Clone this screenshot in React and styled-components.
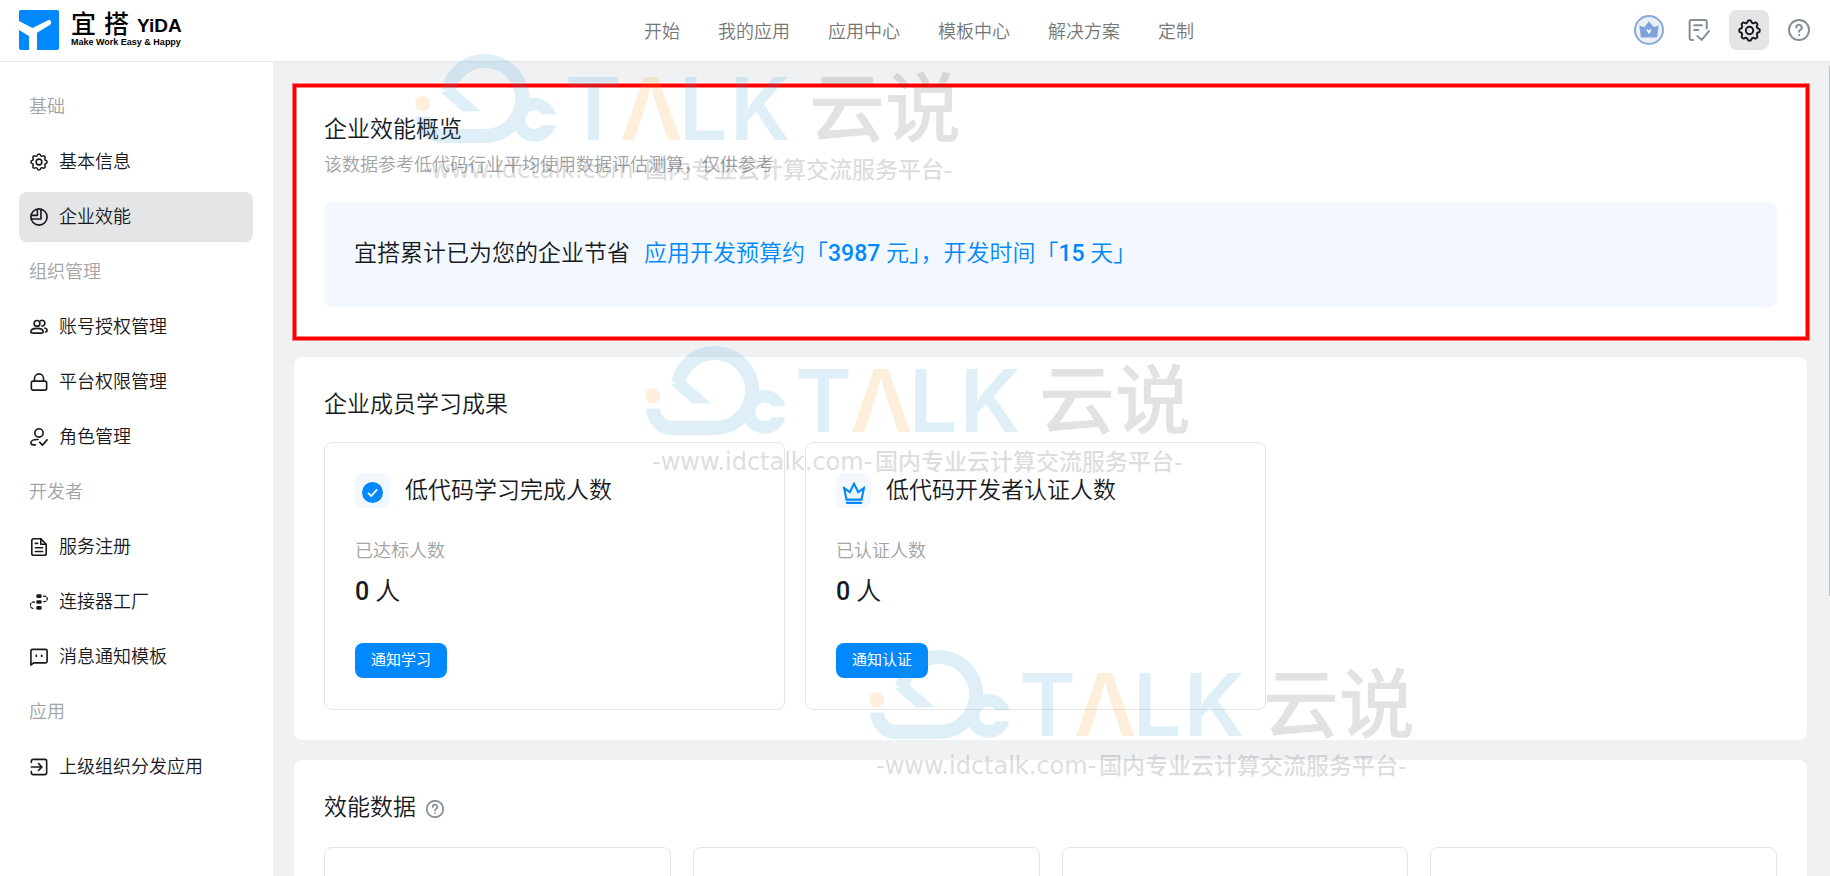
import React, { useState } from 'react';
import styled, { createGlobalStyle } from 'styled-components'

const white = '#ffffff';
const black = '#171a1d';
const grey = '#747677';
const lightGrey = '#a2a3a5';
const blue = '#0089ff';
const paleBlue = '#f3f8ff';
const line = '#e4e5e7';
const selected = '#e4e5e7';
const page = '#f0f1f3';

const GlobalStyle = createGlobalStyle`
  * {
    box-sizing: border-box;
  }

  body {
    margin: 0;
    color: ${black};
    background-color: ${page};
    font-family: Roboto, "Noto Sans CJK SC", sans-serif;
    font-weight: 350;
    font-size: 18px;
  }

  h2, h3, p, ul {
    margin: 0;
    padding: 0;
    font-weight: inherit;
  }
`

const Layout = styled.div`
  position: relative;
  display: flex;
  flex-direction: column;
  height: 100vh;
  overflow: hidden;
`

const Header = styled.header`
  display: grid;
  grid-template-columns: 1fr auto 1fr;
  align-items: center;
  flex: none;
  height: 62px;
  padding: 0 11px 1px 19px;
  background-color: ${white};
  border-bottom: 1px solid ${line};
`

const Brand = styled.a`
  display: flex;
  align-items: center;
  gap: 12px;
  color: #000;
  text-decoration: none;

  svg {
    flex: none;
  }
`

const BrandText = styled.span`
  display: flex;
  flex-direction: column;
  white-space: nowrap;
`

const BrandName = styled.span`
  display: flex;
  align-items: flex-end;
  gap: 8px;
  font-family: "Noto Sans CJK SC", sans-serif;
  font-weight: 500;
  font-size: 25px;
  line-height: 24px;

  b {
    font-family: "Liberation Sans", Arial, sans-serif;
    font-size: 19px;
    line-height: 16px;
  }
`

const Slogan = styled.span`
  font-family: "Liberation Sans", Arial, sans-serif;
  font-weight: 700;
  font-size: 9px;
  line-height: 16px;
`

const TopNav = styled.nav`
  display: flex;
  gap: 38px;
`

const TopLink = styled.a`
  padding-top: 3px;
  color: ${grey};
  line-height: 26px;
  text-decoration: none;
`

const Tools = styled.div`
  display: flex;
  justify-content: flex-end;
  gap: 10px;
`

const ToolButton = styled.button`
  display: flex;
  align-items: center;
  justify-content: center;
  width: 40px;
  height: 40px;
  padding: 0;
  border: none;
  border-radius: 8px;
  color: ${props => props.$active ? black : '#868e96'};
  background-color: ${props => props.$active ? selected : 'transparent'};
  cursor: pointer;
`

const Body = styled.div`
  display: flex;
  flex: 1;
  min-height: 0;
`

const Sidebar = styled.nav`
  flex: none;
  width: 273px;
  padding: 20px 20px 20px 19px;
  background-color: ${white};
`

const Menu = styled.ul`
  display: flex;
  flex-direction: column;
  gap: 5px;
  list-style: none;
`

const MenuLabel = styled.li`
  height: 50px;
  padding-left: 10px;
  color: ${lightGrey};
  line-height: 50px;
`

const MenuLink = styled.a`
  display: flex;
  align-items: center;
  gap: 11px;
  height: 50px;
  padding: 0 11px;
  border-radius: 8px;
  color: ${black};
  background-color: ${props => props.$active ? selected : 'transparent'};
  line-height: 26px;
  text-decoration: none;
`

const Main = styled.main`
  display: flex;
  flex-direction: column;
  flex: 1;
  gap: 20px;
  min-width: 0;
  padding: 20px 23px 20px 21px;
  overflow-y: auto;
  scrollbar-width: none;
`

const Panel = styled.section`
  position: relative;
  flex: none;
  padding: 30px;
  border-radius: 8px;
  background-color: ${white};
`

const Highlight = styled.div`
  position: absolute;
  top: 2px;
  right: -2px;
  bottom: -3px;
  left: -1px;
  border: 3px solid #ff0000;
  box-shadow: 0 0 0 1px rgba(255, 0, 0, .5), inset 0 0 0 1px rgba(255, 0, 0, .5);
  pointer-events: none;
`

const PanelTitle = styled.h2`
  display: flex;
  align-items: center;
  gap: 10px;
  font-size: 23px;
  line-height: 35px;

  svg {
    margin-top: 3px;
    color: #868e96;
  }
`

const Hint = styled.p`
  margin-top: 5px;
  color: ${lightGrey};
  line-height: 26px;
`

const Banner = styled.div`
  display: flex;
  gap: 14px;
  margin-top: 24px;
  padding: 34px 30px 36px;
  border-radius: 8px;
  background-color: ${paleBlue};
  font-size: 23px;
  line-height: 35px;
`

const Saved = styled.span`
  color: ${blue};

  b {
    font-weight: 500;
  }
`

const StudyCards = styled.div`
  display: flex;
  gap: 20px;
  margin-top: 20px;
`

const StudyCard = styled.article`
  flex: 0 1 461px;
  padding: 30px 30px 31px;
  border: 1px solid ${line};
  border-radius: 8px;
`

const StudyHead = styled.div`
  display: flex;
  align-items: center;
  gap: 15px;

  h3 {
    font-size: 23px;
    line-height: 35px;
  }
`

const StudyIcon = styled.span`
  display: flex;
  align-items: center;
  justify-content: center;
  width: 35px;
  height: 35px;
  padding-top: 4px;
  border-radius: 8px;
  color: ${blue};
  background-color: ${paleBlue};
`

const StudyLabel = styled.p`
  margin-top: 30px;
  color: ${lightGrey};
  line-height: 26px;
`

const StudyValue = styled.p`
  margin-top: 10px;
  font-size: 25px;
  line-height: 35px;

  b {
    font-weight: 500;
  }
`

const PrimaryButton = styled.button`
  height: 35px;
  margin-top: 34px;
  padding: 0 16px 4px;
  border: none;
  border-radius: 8px;
  color: ${white};
  background-color: ${blue};
  font: inherit;
  font-weight: 400;
  font-size: 15px;
  cursor: pointer;
`

const DataGrid = styled.div`
  display: grid;
  grid-template-columns: repeat(4, 1fr);
  gap: 22px;
  margin-top: 22px;
`

const DataCard = styled.article`
  height: 180px;
  border: 1px solid ${line};
  border-radius: 8px;
`

const ScrollThumb = styled.div`
  position: absolute;
  top: 66px;
  right: 0;
  width: 1px;
  height: 530px;
  background-color: #c1c1c1;
`

const Mark = styled.svg`
  position: absolute;
  top: ${props => props.$top}px;
  left: ${props => props.$left}px;
  opacity: .15;
  overflow: visible;
  pointer-events: none;
`

const Icon = ({ size = 18, width = 1.8, box = '2 2 20 20', children }) => (
  <svg width={size} height={size} viewBox={box} fill="none" stroke="currentColor"
    strokeWidth={width} strokeLinecap="round" strokeLinejoin="round" aria-hidden="true">
    {children}
  </svg>
)

const GearSVG = ({ size, width = 1.7 }) => (
  <Icon size={size} width={width}>
    <path d="M10.325 4.317c.426-1.756 2.924-1.756 3.35 0a1.724 1.724 0 0 0 2.573 1.066c1.543-.94 3.31.826 2.37 2.37a1.724 1.724 0 0 0 1.065 2.572c1.756.426 1.756 2.924 0 3.35a1.724 1.724 0 0 0-1.066 2.573c.94 1.543-.826 3.31-2.37 2.37a1.724 1.724 0 0 0-2.572 1.065c-.426 1.756-2.924 1.756-3.35 0a1.724 1.724 0 0 0-2.573-1.066c-1.543.94-3.31-.826-2.37-2.37a1.724 1.724 0 0 0-1.065-2.572c-1.756-.426-1.756-2.924 0-3.35a1.724 1.724 0 0 0 1.066-2.573c-.94-1.543.826-3.31 2.37-2.37 1 .608 2.296.07 2.572-1.065z" />
    <circle cx="12" cy="12" r="3.2" />
  </Icon>
)

const HelpSVG = ({ size, width }) => (
  <Icon size={size} width={width}>
    <circle cx="12" cy="12" r="9.1" />
    <path d="M9.5 9.7a2.5 2.5 0 1 1 3.6 2.2c-.7.4-1.1.9-1.1 1.7" />
    <path d="M12 16.6v.1" />
  </Icon>
)

const PieSVG = () => (
  <Icon>
    <circle cx="12" cy="12" r="9" />
    <path d="M14.2 3.4v10.8H3.4" />
    <path d="M10.2 3.6v6.6H3.6" />
  </Icon>
)

const UsersSVG = () => (
  <Icon>
    <circle cx="9.8" cy="8" r="3.2" />
    <path d="M3 17.2c0-2.7 2.8-3.7 6.8-3.7s6.8 1 6.8 3.7c0 1.2-.8 1.6-2.2 1.6H5.2C3.8 18.8 3 18.4 3 17.2z" />
    <path d="M13.8 5a3.2 3.2 0 1 1 1.4 6M18.5 13.2c1.8.6 2.6 1.4 2.6 2.7 0 1-.8 1.6-2 1.7" />
  </Icon>
)

const LockSVG = () => (
  <Icon>
    <rect x="3.5" y="11" width="17" height="10" rx="2" />
    <path d="M7 11V8a5 5 0 0 1 10 0v3" />
  </Icon>
)

const RoleSVG = () => (
  <Icon>
    <circle cx="12" cy="7.5" r="4.6" />
    <path d="M11 14.8c-4.5-.4-8 1-8 3.6 0 1.6 1.2 2.3 3 2.3h2" />
    <path d="M12.8 18l3 3 5.2-5.8" />
  </Icon>
)

const DocSVG = () => (
  <Icon>
    <path d="M14 2.9H6a2 2 0 0 0-2 2v14.2a2 2 0 0 0 2 2h12a2 2 0 0 0 2-2V9z" />
    <path d="M14 3v6h6M8 8h2.5M8 12.8h8M8 17h8" />
  </Icon>
)

const ConnectorSVG = () => (
  <Icon width={1.4}>
    <g fill="currentColor" stroke="none">
      <rect x="9" y="3.5" width="6" height="4" rx="1.5" />
      <rect x="9" y="10" width="6" height="4" rx="1.5" />
      <rect x="9" y="16.5" width="6" height="4" rx="1.5" />
    </g>
    <path d="M17 5.5h1.2a3 3 0 0 1 0 6H17M7 12H5.8a3.5 3.5 0 0 0 0 7H7" strokeDasharray="2.6 1.8" />
  </Icon>
)

const MessageSVG = () => (
  <Icon>
    <path d="M3 21V5a1.5 1.5 0 0 1 1.5-1.5h15A1.5 1.5 0 0 1 21 5v12a1.5 1.5 0 0 1-1.5 1.5H6z" />
    <path d="M9 10.3v.8M15 10.3v.8" strokeWidth="2" />
  </Icon>
)

const EnterSVG = () => (
  <Icon>
    <path d="M3.5 7V5.5a2 2 0 0 1 2-2h13a2 2 0 0 1 2 2v13a2 2 0 0 1-2 2h-13a2 2 0 0 1-2-2V17" />
    <path d="M3.5 12H15M11.5 8.2l3.8 3.8-3.8 3.8" />
  </Icon>
)

const TaskSVG = () => (
  <Icon size={22}>
    <path d="M6.5 21.1H5a1.5 1.5 0 0 1-1.5-1.5V4.4A1.5 1.5 0 0 1 5 2.9h12.5A1.5 1.5 0 0 1 19 4.4v6.2" />
    <path d="M7.6 7.6h7M7.6 12h3.8M10.5 17.5l4 3.5L21 13" />
  </Icon>
)

const VipSVG = () => (
  <svg width="30" height="30" viewBox="0 0 30 30" aria-hidden="true">
    <circle cx="15" cy="15" r="14" fill="#eceff4" stroke="#86a8dd" strokeWidth="2" />
    <path d="M5.3 10.5l5 1.7L15 6.3l4.700 5.900 5-1.700L23.300 21c-.1 1.100-.7 1.600-1.700 1.600H8.400c-1 0-1.600-.5-1.700-1.600z" fill="#7ea3dc" />
    <path d="M13.200 14.500l1.800 3.200 1.800-3.200" fill="none" stroke="#ffffff" strokeWidth="1.6" />
  </svg>
)

const LogoSVG = () => (
  <svg width="40" height="40" viewBox="0 0 40 40" aria-hidden="true">
    <rect width="40" height="40" rx="2" fill={blue} />
    <path d="M0 11l13.5 7L29 10.3c1.5-.7 2.7 0 3 1.5.3 1.4 0 2.4-1.2 3.2L18 22.8V40h-8V26L0 20z" fill={white} />
  </svg>
)

const DoneSVG = () => (
  <svg width="21" height="21" viewBox="0 0 21 21" aria-hidden="true">
    <circle cx="10.5" cy="10.5" r="10.5" fill="currentColor" />
    <path d="M6 10.8l3.2 3.2 6-6.600" fill="none" stroke={white} strokeWidth="1.8" />
  </svg>
)

const CrownSVG = () => (
  <Icon size={22} width={1.9}>
    <path d="M5.2 18L3 7.5l5.2 3.7L12 3.5l3.8 7.7L21 7.5 18.8 18z" strokeLinejoin="miter" />
    <path d="M5.5 21h13" />
  </Icon>
)

const Watermark = ({ top, left }) => (
  <Mark $top={top} $left={left} width="546" height="132" viewBox="0 0 546 132" aria-hidden="true">
    <g fill="none" stroke="#2a9bd7" strokeWidth="14">
      <path d="M8 62.6A20 20 0 0 0 28 82H70A37.5 37.5 0 1 0 33 37" />
    </g>
    <path d="M25.9 38.6L47.3 57.3H65.8L40 34.6z" fill="#2a9bd7" />
    <path d="M140.7 60.3H127A9.3 9.3 0 1 0 127 71.3H140.7A22 22 0 1 1 140.7 60.3z" fill="#2a9bd7" />
    <circle cx="7.7" cy="49.6" r="7.5" fill="#f29b1c" />
    <g fontFamily="Inter, sans-serif" fontWeight="600" fontSize="86" fill="#2a9bd7">
      <text x="150" y="86">T</text>
      <text x="205" y="86" fill="#f29b1c">Λ</text>
      <text x="264" y="86">L</text>
      <text x="315" y="86">K</text>
    </g>
    <text x="394" y="82" fontFamily="'Noto Sans CJK SC', sans-serif" fontWeight="500" fontSize="76" fill="#444">云说</text>
    <g fontWeight="500" fill="#222">
      <text x="7" y="124" fontFamily="'DejaVu Sans', sans-serif" fontSize="24">-www.idctalk.com-</text>
      <text x="230" y="124" fontFamily="'Noto Sans CJK SC', sans-serif" fontSize="23">国内专业云计算交流服务平台-</text>
    </g>
  </Mark>
)

const topLinks = ['开始', '我的应用', '应用中心', '模板中心', '解决方案', '定制']

const menu = [
  { label: '基础' },
  { name: '基本信息', icon: <GearSVG /> },
  { name: '企业效能', icon: <PieSVG /> },
  { label: '组织管理' },
  { name: '账号授权管理', icon: <UsersSVG /> },
  { name: '平台权限管理', icon: <LockSVG /> },
  { name: '角色管理', icon: <RoleSVG /> },
  { label: '开发者' },
  { name: '服务注册', icon: <DocSVG /> },
  { name: '连接器工厂', icon: <ConnectorSVG /> },
  { name: '消息通知模板', icon: <MessageSVG /> },
  { label: '应用' },
  { name: '上级组织分发应用', icon: <EnterSVG /> },
]

const studies = [
  { title: '低代码学习完成人数', label: '已达标人数', count: 0, action: '通知学习', icon: <DoneSVG /> },
  { title: '低代码开发者认证人数', label: '已认证人数', count: 0, action: '通知认证', icon: <CrownSVG /> },
]

const NavBar = () => (
  <Header>
    <Brand href="#">
      <LogoSVG />
      <BrandText>
        <BrandName><span>宜</span><span>搭</span><b>YiDA</b></BrandName>
        <Slogan>Make Work Easy &amp; Happy</Slogan>
      </BrandText>
    </Brand>
    <TopNav>
      {topLinks.map(name => <TopLink key={name} href="#">{name}</TopLink>)}
    </TopNav>
    <Tools>
      <ToolButton type="button" aria-label="会员"><VipSVG /></ToolButton>
      <ToolButton type="button" aria-label="任务"><TaskSVG /></ToolButton>
      <ToolButton type="button" aria-label="设置" $active><GearSVG size={23} /></ToolButton>
      <ToolButton type="button" aria-label="帮助"><HelpSVG size={22} /></ToolButton>
    </Tools>
  </Header>
)

const App = () => {

  const [current, setCurrent] = useState('企业效能')

  return (
    <Layout>
      <GlobalStyle />
      <NavBar />
      <Body>
        <Sidebar>
          <Menu>
            {menu.map(item => (
              item.label ?
                <MenuLabel key={item.label}>{item.label}</MenuLabel>
                :
                <li key={item.name}>
                  <MenuLink href="#" $active={item.name === current} onClick={() => setCurrent(item.name)}>
                    {item.icon}<span>{item.name}</span>
                  </MenuLink>
                </li>
            ))}
          </Menu>
        </Sidebar>
        <Main>
          <Panel>
            <PanelTitle>企业效能概览</PanelTitle>
            <Hint>该数据参考低代码行业平均使用数据评估测算，仅供参考</Hint>
            <Banner>
              <span>宜搭累计已为您的企业节省</span>
              <Saved>应用开发预算约「<b>3987</b> 元」，开发时间「<b>15</b> 天」</Saved>
            </Banner>
            <Highlight />
          </Panel>
          <Panel>
            <PanelTitle>企业成员学习成果</PanelTitle>
            <StudyCards>
              {studies.map(study => (
                <StudyCard key={study.title}>
                  <StudyHead>
                    <StudyIcon>{study.icon}</StudyIcon>
                    <h3>{study.title}</h3>
                  </StudyHead>
                  <StudyLabel>{study.label}</StudyLabel>
                  <StudyValue><b>{study.count}</b> 人</StudyValue>
                  <PrimaryButton type="button">{study.action}</PrimaryButton>
                </StudyCard>
              ))}
            </StudyCards>
          </Panel>
          <Panel>
            <PanelTitle>效能数据 <HelpSVG width={1.9} /></PanelTitle>
            <DataGrid>
              <DataCard />
              <DataCard />
              <DataCard />
              <DataCard />
            </DataGrid>
          </Panel>
        </Main>
      </Body>
      <ScrollThumb />
      <Watermark top={54} left={415} />
      <Watermark top={346} left={645} />
      <Watermark top={650} left={869} />
    </Layout>
  );
}

export default App;
